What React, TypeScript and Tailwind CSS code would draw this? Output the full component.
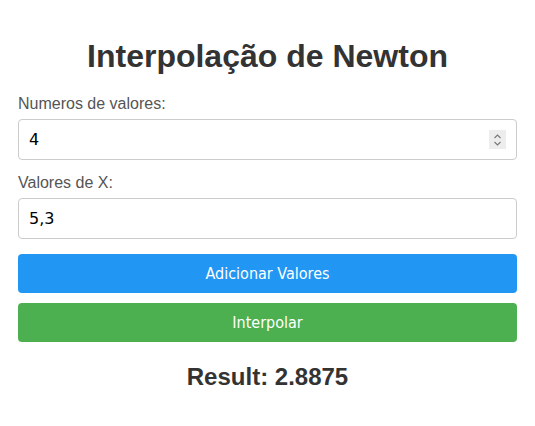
export default function App() {
  return (
    <div className="min-h-screen bg-white px-[18px] pt-[36px] font-['Liberation_Sans',Arial,sans-serif]">
      <h1 className="text-center text-[32px] font-bold leading-[40px] text-[#333]">
        Interpolação de Newton
      </h1>
      <div className="mt-[18px] flex flex-col">
        <label className="text-[16px] leading-[20px] text-[#555]">Numeros de valores:</label>
        <div className="relative mt-[5px]">
          <input
            type="text"
            defaultValue="4"
            className="h-[41px] w-full rounded-[4px] border border-[#ccc] px-[10px] text-[16px] text-black outline-none font-['DejaVu_Sans',Verdana,sans-serif]"
          />
          <div className="absolute right-[11px] top-[11px] flex h-[19px] w-[17px] flex-col items-center justify-center bg-[#ededed]">
            <svg width="9" height="14" viewBox="0 0 9 14" fill="none" stroke="#777" strokeWidth="1.1">
              <path d="M1.5 5 L4.5 2 L7.5 5" />
              <path d="M1.5 9 L4.5 12 L7.5 9" />
            </svg>
          </div>
        </div>
        <label className="mt-[13px] text-[16px] leading-[20px] text-[#555]">Valores de X:</label>
        <input
          type="text"
          defaultValue="5,3"
          className="mt-[5px] h-[41px] w-full rounded-[4px] border border-[#ccc] px-[10px] text-[16px] text-black outline-none font-['DejaVu_Sans',Verdana,sans-serif]"
        />
        <button className="mt-[15px] h-[39px] w-full rounded-[4px] bg-[#2196F3] text-[16px] text-white font-['DejaVu_Sans_Condensed',Tahoma,sans-serif]">
          Adicionar Valores
        </button>
        <button className="mt-[10px] h-[39px] w-full rounded-[4px] bg-[#4CAF50] text-[16px] text-white font-['DejaVu_Sans_Condensed',Tahoma,sans-serif]">
          Interpolar
        </button>
      </div>
      <div className="mt-[19px] text-center text-[24px] font-bold leading-[32px] text-[#333]">
        Result: 2.8875
      </div>
    </div>
  );
}
